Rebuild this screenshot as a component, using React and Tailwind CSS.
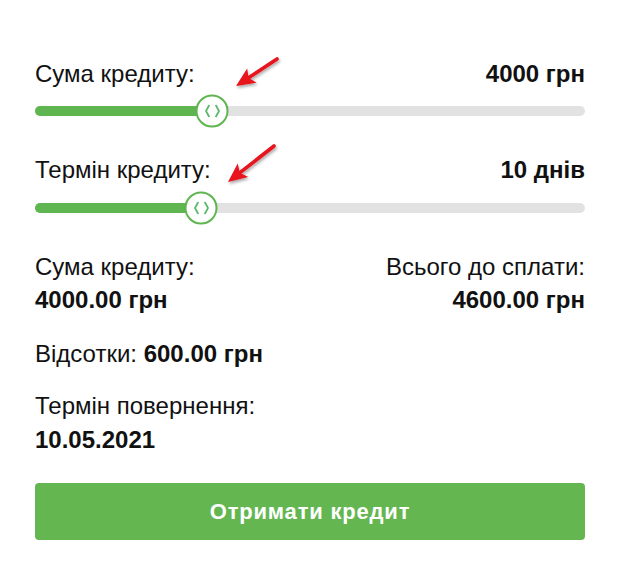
import React from "react";

function Thumb() {
  return (
    <div className="absolute top-1/2 -translate-x-1/2 -translate-y-1/2 w-[33px] h-[33px] rounded-full bg-white border-2 border-[#5fb54f] flex items-center justify-center">
      <svg width="16" height="13" viewBox="0 0 16 13" fill="none">
        <polyline points="4.5,1 1.5,6.5 4.5,12" stroke="#5db96e" strokeWidth="1.8" strokeLinecap="round" strokeLinejoin="round" />
        <polyline points="11.5,1 14.5,6.5 11.5,12" stroke="#5db96e" strokeWidth="1.8" strokeLinecap="round" strokeLinejoin="round" />
      </svg>
    </div>
  );
}

function Slider({ percent }) {
  return (
    <div className="relative h-[10px] rounded-full bg-[#e2e2e2]">
      <div className="h-full rounded-full bg-[#5fb54f]" style={{ width: `${percent}%` }} />
      <div className="absolute inset-0">
        <div className="relative h-full" style={{ marginLeft: `${percent}%` }}>
          <Thumb />
        </div>
      </div>
    </div>
  );
}

function Arrow({ x1, y1, x2, y2 }) {
  // tail (x1,y1) -> tip (x2,y2)
  const ang = Math.atan2(y2 - y1, x2 - x1);
  const len = 19;
  const w = 8.5;
  const bx = x2 - len * Math.cos(ang);
  const by = y2 - len * Math.sin(ang);
  const px = -Math.sin(ang) * w;
  const py = Math.cos(ang) * w;
  return (
    <g filter="url(#shadow)">
      <line x1={x1} y1={y1} x2={bx + 3 * Math.cos(ang)} y2={by + 3 * Math.sin(ang)} stroke="#e8121b" strokeWidth="3.6" strokeLinecap="round" />
      <polygon points={`${x2},${y2} ${bx + px},${by + py} ${bx + 4 * Math.cos(ang)},${by + 4 * Math.sin(ang)} ${bx - px},${by - py}`} fill="#e8121b" />
    </g>
  );
}

export default function App() {
  return (
    <div className="relative w-[619px] h-[568px] bg-white text-[#111] font-['Liberation_Sans',Arial,sans-serif]">
      <div className="w-[550px] ml-[35px] pt-[60px]">
        <div className="flex justify-between items-center h-[28px] text-[24px]">
          <span>Сума кредиту:</span>
          <span className="font-bold">4000 грн</span>
        </div>
        <div className="mt-[18px]">
          <Slider percent={32.2} />
        </div>

        <div className="flex justify-between items-center h-[28px] text-[24px] mt-[40px]">
          <span>Термін кредиту:</span>
          <span className="font-bold">10 днів</span>
        </div>
        <div className="mt-[19px]">
          <Slider percent={30.2} />
        </div>

        <div className="flex justify-between text-[24px] leading-[33px] mt-[37px]">
          <div>
            <div>Сума кредиту:</div>
            <div className="font-bold">4000.00 грн</div>
          </div>
          <div className="text-right">
            <div>Всього до сплати:</div>
            <div className="font-bold">4600.00 грн</div>
          </div>
        </div>

        <div className="text-[24px] leading-[33px] mt-[21px]">
          Відсотки: <span className="font-bold">600.00 грн</span>
        </div>

        <div className="text-[24px] leading-[34px] mt-[19px]">
          <div>Термін повернення:</div>
          <div className="font-bold">10.05.2021</div>
        </div>

        <button className="mt-[26px] w-full h-[57px] rounded-[4px] bg-[#64b650] text-white text-[22px] font-bold tracking-[0.8px]">
          Отримати кредит
        </button>
      </div>

      <svg className="absolute inset-0 pointer-events-none" width="619" height="568">
        <defs>
          <filter id="shadow" x="-50%" y="-50%" width="200%" height="200%">
            <feDropShadow dx="1" dy="2" stdDeviation="1.5" floodColor="#000" floodOpacity="0.35" />
          </filter>
        </defs>
        <Arrow x1={277} y1={59} x2={236} y2={86} />
        <Arrow x1={274} y1={146} x2={228} y2={182} />
      </svg>
    </div>
  );
}
